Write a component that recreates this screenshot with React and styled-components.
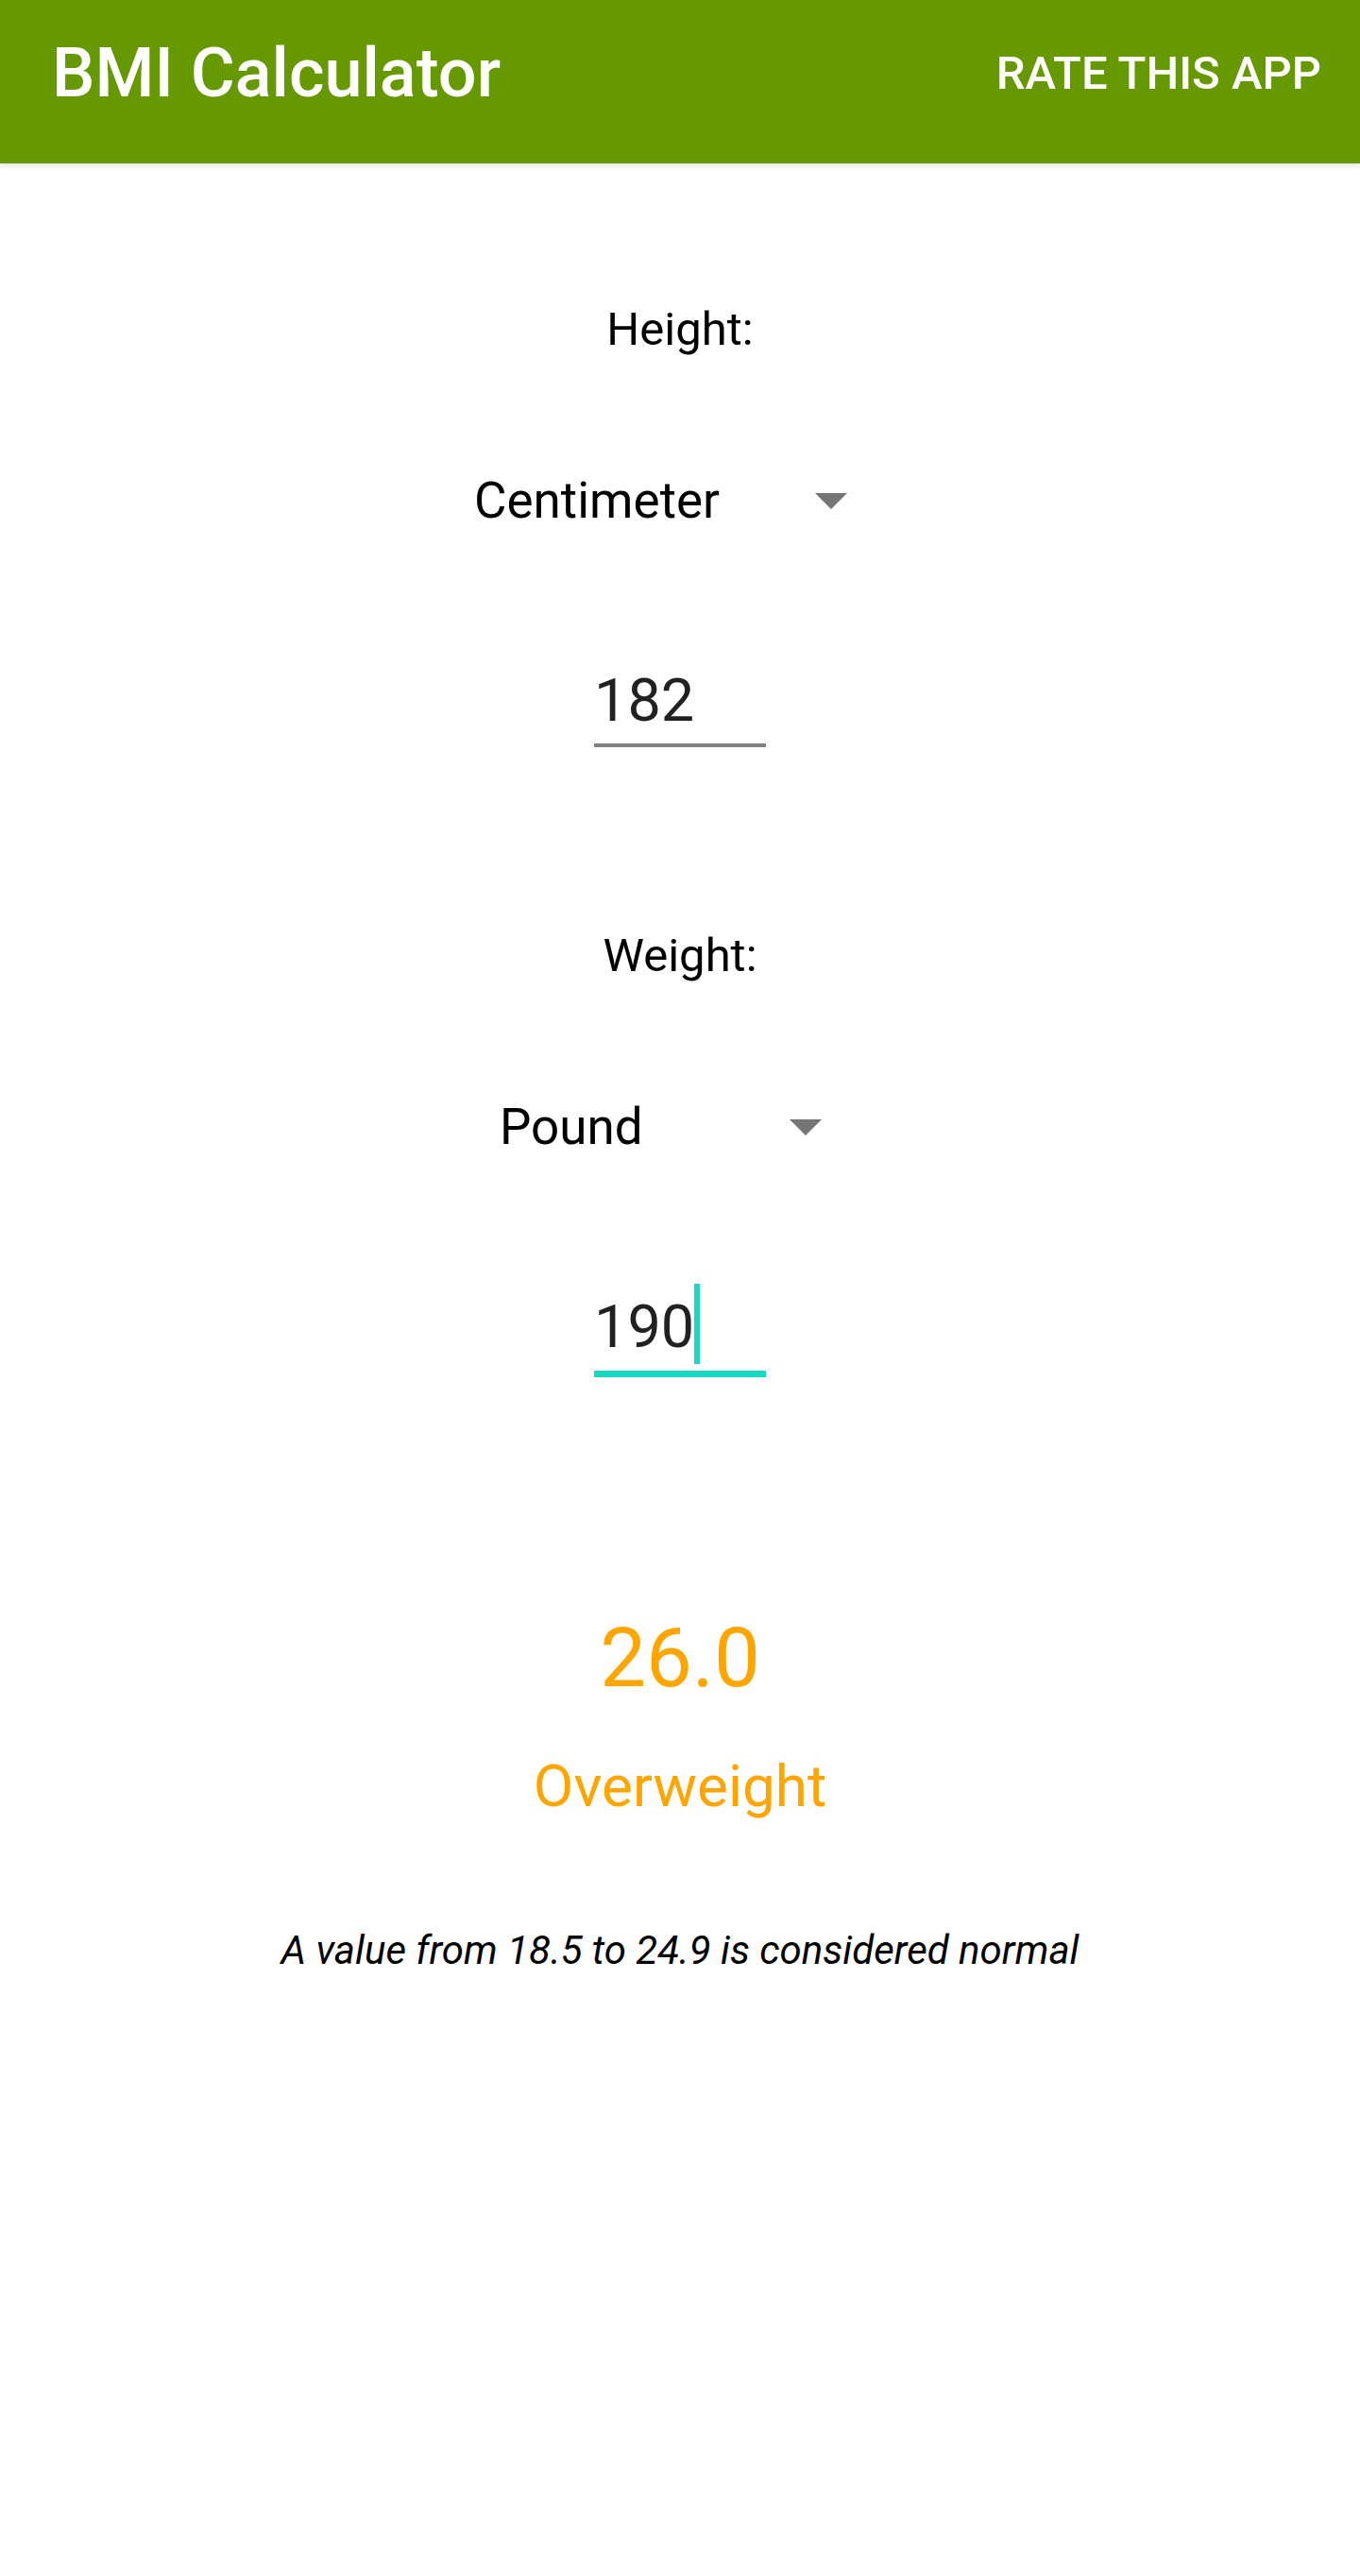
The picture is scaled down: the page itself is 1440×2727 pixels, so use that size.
import React from "react";
import styled, { createGlobalStyle } from "styled-components";

const GlobalStyle = createGlobalStyle`
  body {
    margin: 0;
    background: #fff;
    font-family: Roboto, "Liberation Sans", sans-serif;
  }
`;

const Page = styled.div`
  min-height: 2727px;
  background: #fff;
`;

const AppBar = styled.header`
  height: 173px;
  background: #669900;
  display: flex;
  justify-content: space-between;
  align-items: flex-start;
  padding: 0 41px 0 55px;
  box-shadow: 0 2px 6px rgba(0, 0, 0, 0.14);
  position: relative;
`;

const Title = styled.h1`
  margin: 42px 0 0;
  font-size: 72px;
  line-height: 1;
  font-weight: 500;
  color: #fff;
`;

const RateButton = styled.button`
  margin-top: 53px;
  padding: 0;
  border: none;
  background: none;
  font-family: inherit;
  font-size: 49px;
  line-height: 1;
  font-weight: 500;
  color: #fff;
`;

const Main = styled.main`
  display: flex;
  flex-direction: column;
  align-items: center;
`;

const Label = styled.div`
  margin-top: ${(p) => p.$top}px;
  font-size: 49px;
  line-height: 1;
  color: #000;
`;

const Spinner = styled.div`
  margin-top: 131px;
  width: ${(p) => p.$width}px;
  height: 53px;
  padding-right: 41px;
  box-sizing: border-box;
  display: flex;
  align-items: center;
  justify-content: space-between;
  font-size: 53px;
  line-height: 1;
  color: #000;
`;

const Field = styled.div`
  margin-top: 153px;
  width: 182px;
  padding-bottom: ${(p) => (p.$focused ? 15 : 14)}px;
  border-bottom: ${(p) => (p.$focused ? "7px solid #1ad9c3" : "4px solid #808080")};
`;

const Value = styled.div`
  display: flex;
  align-items: flex-start;
  height: 63px;
  font-size: 63px;
  line-height: 1;
  color: #212121;
`;

const Caret = styled.span`
  width: 6px;
  height: 85px;
  margin-top: -14px;
  background: #1ad9c3;
  flex-shrink: 0;
`;

const Score = styled.div`
  margin-top: 254px;
  font-size: 87px;
  line-height: 1;
  color: #ffa500;
`;

const Verdict = styled.div`
  margin-top: 61px;
  font-size: 62px;
  line-height: 1;
  color: #ffa500;
`;

const Note = styled.p`
  margin: 122px 0 0;
  font-size: 42px;
  line-height: 1;
  font-style: italic;
  color: #000;
`;

const Arrow = () => (
  <svg width="34" height="17" viewBox="0 0 34 17">
    <polygon points="0,0 34,0 17,17" fill="#757575" />
  </svg>
);

const UnitPicker = ({ unit, width }) => (
  <Spinner $width={width}>
    <span>{unit}</span>
    <Arrow />
  </Spinner>
);

const NumberField = ({ value, focused }) => (
  <Field $focused={focused}>
    <Value>
      {value}
      {focused && <Caret />}
    </Value>
  </Field>
);

export default function App() {
  return (
    <Page>
      <GlobalStyle />
      <AppBar>
        <Title>BMI Calculator</Title>
        <RateButton>RATE THIS APP</RateButton>
      </AppBar>
      <Main>
        <Label $top={151}>Height:</Label>
        <UnitPicker unit="Centimeter" width={436} />
        <NumberField value="182" />
        <Label $top={196}>Weight:</Label>
        <UnitPicker unit="Pound" width={382} />
        <NumberField value="190" focused />
        <Score>26.0</Score>
        <Verdict>Overweight</Verdict>
        <Note>A value from 18.5 to 24.9 is considered normal</Note>
      </Main>
    </Page>
  );
}
